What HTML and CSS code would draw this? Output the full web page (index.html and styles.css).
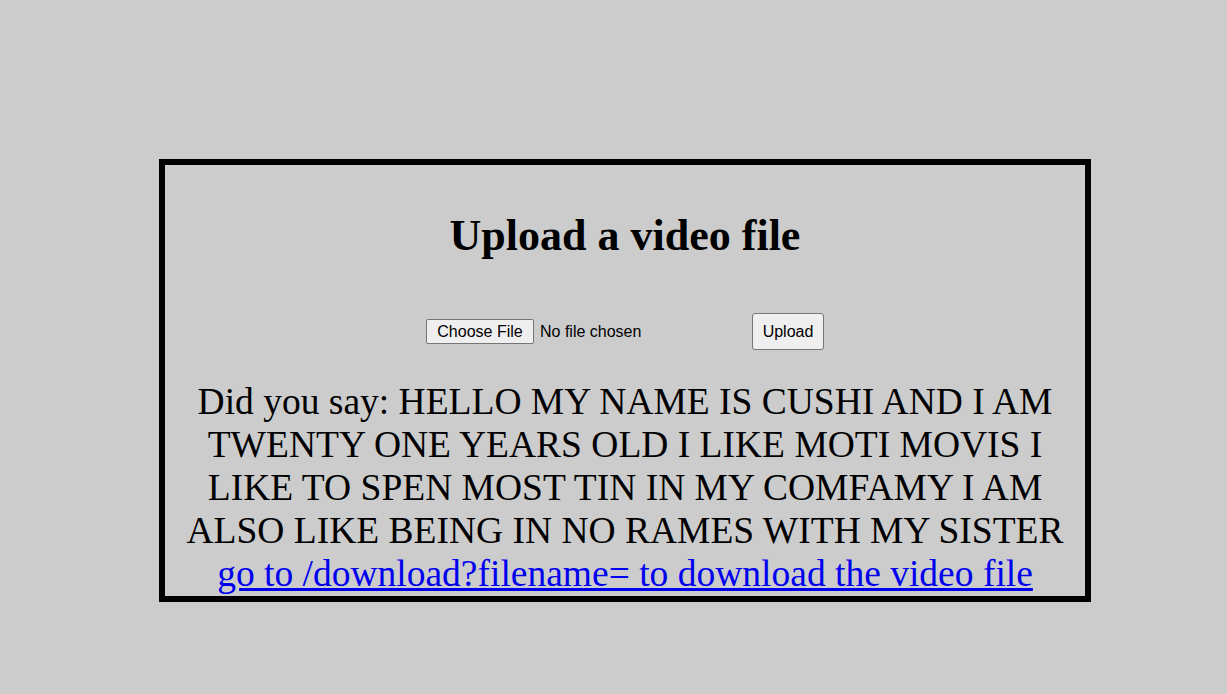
FILE: index.html
```html
<!DOCTYPE html>
<html lang="en">
<head>
<meta charset="utf-8">
<title>Upload a video file</title>
<link rel="stylesheet" href="styles.css">
</head>
<body>
<div class="box">
  <h1 class="title">Upload a video file</h1>
  <form class="upload-form">
    <input class="file-input" type="file" name="file">
    <button class="upload-btn" type="button">Upload</button>
  </form>
  <p class="result">Did you say: HELLO MY NAME IS CUSHI AND I AM TWENTY ONE YEARS OLD I LIKE MOTI MOVIS I LIKE TO SPEN MOST TIN IN MY COMFAMY I AM ALSO LIKE BEING IN NO RAMES WITH MY SISTER<br><a class="dl-link" href="#">go to /download?filename= to download the video file</a></p>
</div>
</body>
</html>
```
FILE: styles.css
```css
html, body {
  margin: 0;
  padding: 0;
  background: #cccccc;
}
body {
  font-family: "Liberation Serif", "Times New Roman", serif;
  color: #000;
  padding-top: 159px;
  padding-left: 159px;
}
.box {
  width: 920px;
  border: 6px solid #000;
  text-align: center;
  padding-bottom: 1px;
}
.title {
  margin: 45px 0 0;
  font-size: 44px;
  font-weight: bold;
  line-height: normal;
}
.upload-form {
  margin-top: 52px;
  display: flex;
  justify-content: center;
  align-items: center;
  gap: 4px;
}
.file-input {
  width: 322px;
  font-family: "Liberation Sans", Arial, sans-serif;
  font-size: 16px;
  color: #000;
  text-align: left;
}
.file-input::file-selector-button {
  font-family: "Liberation Sans", Arial, sans-serif;
  font-size: 16px;
  height: 25px;
  width: 108px;
  padding: 0;
  margin-right: 6px;
  background: #efefef;
  border: 1px solid #767676;
  border-radius: 2px;
  color: #000;
}
.upload-btn {
  font-family: "Liberation Sans", Arial, sans-serif;
  font-size: 16px;
  height: 37px;
  width: 72px;
  padding: 0;
  background: #efefef;
  border: 1px solid #767676;
  border-radius: 3px;
  color: #000;
}
.result {
  margin: 30px 0 0;
  padding: 0 15px;
  font-size: 37.5px;
  line-height: 43px;
}
.dl-link {
  color: #0000ee;
  text-decoration: underline;
}
```
